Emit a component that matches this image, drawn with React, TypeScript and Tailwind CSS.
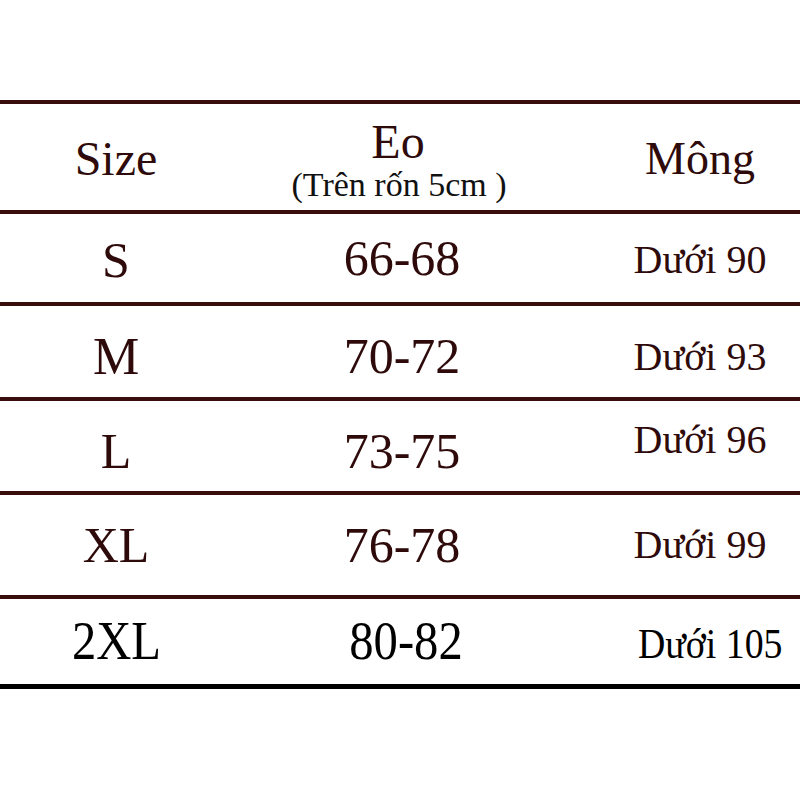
const BROWN = "text-[#2e0a0a]";

type Cell = { text: string; cls: string };
type Row = { h: string; cells: [Cell, Cell, Cell] };

const ROWS: Row[] = [
  {
    h: "h-[88px]",
    cells: [
      { text: "S", cls: `text-[50px] ${BROWN} pt-[4px]` },
      { text: "66-68", cls: `text-[50px] ${BROWN}` },
      { text: "Dưới 90", cls: `text-[40px] ${BROWN} pl-[28px] pt-[4px]` },
    ],
  },
  {
    h: "h-[91px]",
    cells: [
      { text: "M", cls: `text-[52px] ${BROWN} pt-[10px]` },
      { text: "70-72", cls: `text-[50px] ${BROWN} pt-[8px]` },
      { text: "Dưới 93", cls: `text-[40px] ${BROWN} pl-[28px] pt-[10px]` },
    ],
  },
  {
    h: "h-[90px]",
    cells: [
      { text: "L", cls: `text-[50px] ${BROWN} pt-[10px]` },
      { text: "73-75", cls: `text-[50px] ${BROWN} pt-[10px]` },
      { text: "Dưới 96", cls: `text-[40px] ${BROWN} pl-[28px] pb-[12px]` },
    ],
  },
  {
    h: "h-[100px]",
    cells: [
      { text: "XL", cls: `text-[50px] ${BROWN}` },
      { text: "76-78", cls: `text-[50px] ${BROWN}` },
      { text: "Dưới 99", cls: `text-[40px] ${BROWN} pl-[28px]` },
    ],
  },
];

function Line({ black }: { black?: boolean }) {
  return <div className={black ? "h-[5px] bg-black" : "h-[4px] bg-[#3a0d0d]"} />;
}

export default function App() {
  return (
    <div className="w-[800px] h-[800px] bg-white font-['Liberation_Serif',serif] leading-none">
      <div className="h-[100px]" />
      <Line />
      {/* header */}
      <div className="grid grid-cols-[232px_340px_1fr] h-[106px]">
        <div className={`flex items-center justify-center text-[48px] ${BROWN} pt-[4px]`}>Size</div>
        <div className={`flex flex-col items-center justify-center ${BROWN} pt-[6px]`}>
          <span className="text-[48px] pb-[2px] -ml-[8px]">Eo</span>
          <span className="text-[34px] text-[#111] -ml-[6px]">(Trên rốn 5cm )</span>
        </div>
        <div className={`flex items-center justify-center text-[46px] ${BROWN} pl-[28px] pt-[4px]`}>Mông</div>
      </div>
      <Line />
      {ROWS.map((r, i) => (
        <div key={i}>
          <div className={`grid grid-cols-[232px_340px_1fr] ${r.h}`}>
            {r.cells.map((c, j) => (
              <div key={j} className={`flex items-center justify-center ${c.cls}`}>
                {c.text}
              </div>
            ))}
          </div>
          <Line />
        </div>
      ))}
      {/* last row, darker condensed print */}
      <div className="grid grid-cols-[232px_340px_1fr] h-[85px] text-black">
        <div className="flex items-center justify-center pb-[2px]">
          <span className="inline-block text-[54px] scale-x-90">2XL</span>
        </div>
        <div className="flex items-center justify-center pb-[2px] pl-[8px]">
          <span className="inline-block text-[54px] scale-x-90">80-82</span>
        </div>
        <div className="flex items-center justify-center pl-[48px] pt-[4px]">
          <span className="inline-block text-[42px] scale-x-90">Dưới 105</span>
        </div>
      </div>
      <Line black />
    </div>
  );
}
